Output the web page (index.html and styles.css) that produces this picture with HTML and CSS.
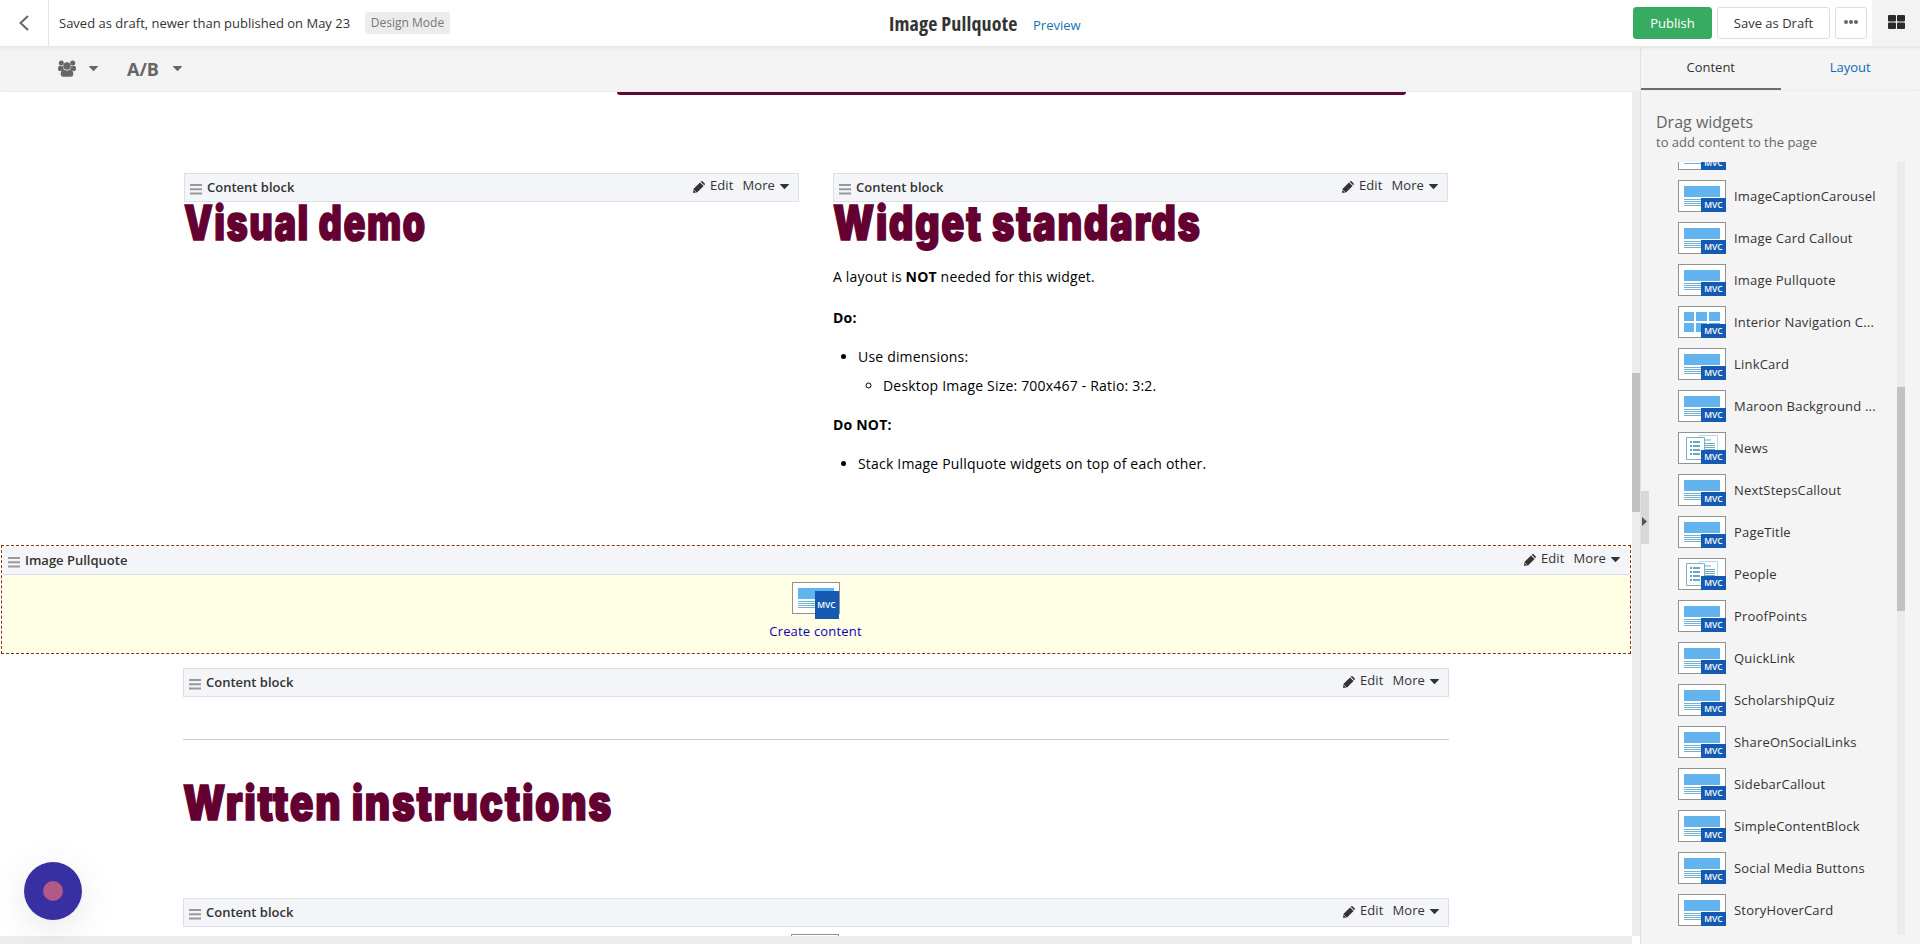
FILE: index.html
```
<!DOCTYPE html>
<html lang="en">
<head>
  <meta charset="UTF-8">
  <meta name="viewport" content="width=device-width, initial-scale=1.0">
  <title>Image Pullquote</title>
  <link rel="stylesheet" href="styles.css">
</head>
<body>
  <svg class="sprite" aria-hidden="true">
    <symbol id="bars" viewBox="0 0 12 11"><path d="M0 0h12v2H0zM0 4.3h12v2H0zM0 8.6h12v2H0z"/></symbol>
    <symbol id="pencil" viewBox="0 0 12 12"><path d="M0 12l.7-4.300L7 1.400l3.600 3.600L4.300 11.300zM7.700.8L8.300.3q.6-.5 1.200 0l2.200 2.200q.5.600 0 1.200l-.5.600z"/><path d="M1.200 9.200l1.600 1.600" stroke="#f3f5f8" stroke-width=".7"/></symbol>
    <symbol id="caret" viewBox="0 0 9 5"><path d="M.3 0h8.4q.5.3.1.7L5 4.7q-.5.5-1 0L.2.7Q-.2.3.3 0z"/></symbol>
    <symbol id="card" viewBox="0 0 48 32">
      <rect x=".5" y=".5" width="47" height="31" fill="#fff" stroke="#929292"/>
      <path d="M6 6h36v11H6z" fill="#63b3ee"/>
      <path d="M6 19.5h36M6 21.5h36M6 23.5h36M6 25.5h36" stroke="#74b3d0" stroke-width="1"/>
    </symbol>
    <symbol id="tiles" viewBox="0 0 48 32">
      <rect x=".5" y=".5" width="47" height="31" fill="#fff" stroke="#929292"/>
      <path d="M6 6h10v9H6zM18 6h11v9H18zM31 6h11v9H31zM6 17h10v9H6zM18 17h11v9H18zM31 17h11v9H31z" fill="#63b3ee"/>
    </symbol>
    <symbol id="list" viewBox="0 0 48 32">
      <rect x=".5" y=".5" width="47" height="31" fill="#fff" stroke="#929292"/>
      <path d="M21.5 5V3.5h18v21h-12" fill="none" stroke="#b5dbe5"/>
      <path d="M27 8h6M27 11.5h10M27 13.5h10M27 15.5h10M27 17.5h10" stroke="#6fa8c4"/>
      <path d="M8.500 5.500h18v22h-18z" fill="#fff" stroke="#7fb1c6"/>
      <path d="M12 10h2M12 14h2M12 18h2M12 22h2M15 10h7M15 14h7M15 18h7M15 22h7" stroke="#6fa8c4" stroke-width="2"/>
    </symbol>
  </svg>

  <header class="topbar">
    <a class="back"><svg width="10" height="16" viewBox="0 0 10 16"><path d="M9 1L1.500 8 9 15" fill="none" stroke="#666" stroke-width="2"/></svg></a>
    <span class="status">Saved as draft, newer than published on May 23</span>
    <span class="mode">Design Mode</span>
    <div class="page-title">
      <h1>Image Pullquote</h1>
      <a class="preview">Preview</a>
    </div>
    <div class="actions">
      <button class="btn publish">Publish</button>
      <button class="btn draft">Save as Draft</button>
      <button class="btn dots"><i></i><i></i><i></i></button>
      <div class="toggle"><svg width="17" height="14" viewBox="0 0 17 14" fill="#2b2b2b"><rect width="8" height="6.400" rx="1"/><rect x="9" width="8" height="6.400" rx="1"/><rect y="7.600" width="8" height="6.400" rx="1"/><rect x="9" y="7.600" width="8" height="6.400" rx="1"/></svg></div>
    </div>
  </header>

  <div class="workspace">
    <div class="editor">
      <div class="toolbar">
        <svg class="users" width="18" height="17" viewBox="0 0 18 17"><circle cx="3.300" cy="3" r="2.500"/><circle cx="14.700" cy="3" r="2.500"/><path d="M0 9q0-3.300 2-3.300 2 1 3.500.5Q4.800 8.300 6 9.500q-2 .2-3 1.500H1.500Q0 11 0 9zM18 9q0-3.300-2-3.300-2 1-3.500.5.7 2.100-.5 3.300 2 .2 3 1.500h1.500Q18 11 18 9z"/><circle cx="9" cy="6" r="3.700"/><path d="M2.700 14.300q0-4.800 3.200-4.800 3.100 2.300 6.200 0 3.200 0 3.200 4.800 0 2.400-2.300 2.400H5q-2.300 0-2.300-2.400z"/></svg>
        <svg class="arrow" width="9" height="5"><use href="#caret"/></svg>
        <span class="ab">A/B</span>
        <svg class="arrow" width="9" height="5"><use href="#caret"/></svg>
      </div>

      <div class="frame">
        <div class="canvas">
          <div class="hero-edge"></div>

          <div class="columns">
            <section>
              <div class="block-bar">
                <svg class="grip" width="12" height="11"><use href="#bars"/></svg><b>Content block</b>
                <span class="tools"><svg width="12" height="12"><use href="#pencil"/></svg><a>Edit</a><a>More</a><svg width="9" height="5"><use href="#caret"/></svg></span>
              </div>
              <h2><span class="h-visual">Visual demo</span></h2>
            </section>
            <section>
              <div class="block-bar">
                <svg class="grip" width="12" height="11"><use href="#bars"/></svg><b>Content block</b>
                <span class="tools"><svg width="12" height="12"><use href="#pencil"/></svg><a>Edit</a><a>More</a><svg width="9" height="5"><use href="#caret"/></svg></span>
              </div>
              <h2><span class="h-widget">Widget standards</span></h2>
              <div class="copy">
                <p>A layout is <strong>NOT</strong> needed for this widget.</p>
                <p><strong>Do:</strong></p>
                <ul>
                  <li>Use dimensions:
                    <ul>
                      <li>Desktop Image Size: 700x467 - Ratio: 3:2.</li>
                    </ul>
                  </li>
                </ul>
                <p><strong>Do NOT:</strong></p>
                <ul>
                  <li>Stack Image Pullquote widgets on top of each other.</li>
                </ul>
              </div>
            </section>
          </div>

          <div class="pullquote">
            <div class="block-bar flush">
              <svg class="grip" width="12" height="11"><use href="#bars"/></svg><b>Image Pullquote</b>
              <span class="tools"><svg width="12" height="12"><use href="#pencil"/></svg><a>Edit</a><a>More</a><svg width="9" height="5"><use href="#caret"/></svg></span>
            </div>
            <div class="create">
              <div class="thumb large"><svg width="48" height="32"><use href="#card"/></svg><span>MVC</span></div>
              <a>Create content</a>
            </div>
          </div>

          <div class="wide">
            <div class="block-bar">
              <svg class="grip" width="12" height="11"><use href="#bars"/></svg><b>Content block</b>
              <span class="tools"><svg width="12" height="12"><use href="#pencil"/></svg><a>Edit</a><a>More</a><svg width="9" height="5"><use href="#caret"/></svg></span>
            </div>
            <hr>
            <h2><span class="h-written">Written instructions</span></h2>
            <div class="block-bar last">
              <svg class="grip" width="12" height="11"><use href="#bars"/></svg><b>Content block</b>
              <span class="tools"><svg width="12" height="12"><use href="#pencil"/></svg><a>Edit</a><a>More</a><svg width="9" height="5"><use href="#caret"/></svg></span>
            </div>
            <div class="next-widget"><svg width="48" height="32"><use href="#card"/></svg></div>
          </div>
        </div>
        <div class="scroll-y"><div class="thumb-y"></div></div>
        <div class="scroll-x"></div>
      </div>
    </div>

    <aside class="sidebar">
      <div class="tabs">
        <a class="tab active">Content</a>
        <a class="tab">Layout</a>
      </div>
      <div class="intro">
        <h3>Drag widgets</h3>
        <p>to add content to the page</p>
      </div>
      <div class="widget-area">
        <ul class="widgets">
          <li><div class="thumb"><svg width="48" height="32"><use href="#card"/></svg><span>MVC</span></div></li>
          <li><div class="thumb"><svg width="48" height="32"><use href="#card"/></svg><span>MVC</span></div><em>ImageCaptionCarousel</em></li>
          <li><div class="thumb"><svg width="48" height="32"><use href="#card"/></svg><span>MVC</span></div><em>Image Card Callout</em></li>
          <li><div class="thumb"><svg width="48" height="32"><use href="#card"/></svg><span>MVC</span></div><em>Image Pullquote</em></li>
          <li><div class="thumb"><svg width="48" height="32"><use href="#tiles"/></svg><span>MVC</span></div><em>Interior Navigation C...</em></li>
          <li><div class="thumb"><svg width="48" height="32"><use href="#card"/></svg><span>MVC</span></div><em>LinkCard</em></li>
          <li><div class="thumb"><svg width="48" height="32"><use href="#card"/></svg><span>MVC</span></div><em>Maroon Background ...</em></li>
          <li><div class="thumb"><svg width="48" height="32"><use href="#list"/></svg><span>MVC</span></div><em>News</em></li>
          <li><div class="thumb"><svg width="48" height="32"><use href="#card"/></svg><span>MVC</span></div><em>NextStepsCallout</em></li>
          <li><div class="thumb"><svg width="48" height="32"><use href="#card"/></svg><span>MVC</span></div><em>PageTitle</em></li>
          <li><div class="thumb"><svg width="48" height="32"><use href="#list"/></svg><span>MVC</span></div><em>People</em></li>
          <li><div class="thumb"><svg width="48" height="32"><use href="#card"/></svg><span>MVC</span></div><em>ProofPoints</em></li>
          <li><div class="thumb"><svg width="48" height="32"><use href="#card"/></svg><span>MVC</span></div><em>QuickLink</em></li>
          <li><div class="thumb"><svg width="48" height="32"><use href="#card"/></svg><span>MVC</span></div><em>ScholarshipQuiz</em></li>
          <li><div class="thumb"><svg width="48" height="32"><use href="#card"/></svg><span>MVC</span></div><em>ShareOnSocialLinks</em></li>
          <li><div class="thumb"><svg width="48" height="32"><use href="#card"/></svg><span>MVC</span></div><em>SidebarCallout</em></li>
          <li><div class="thumb"><svg width="48" height="32"><use href="#card"/></svg><span>MVC</span></div><em>SimpleContentBlock</em></li>
          <li><div class="thumb"><svg width="48" height="32"><use href="#card"/></svg><span>MVC</span></div><em>Social Media Buttons</em></li>
          <li><div class="thumb"><svg width="48" height="32"><use href="#card"/></svg><span>MVC</span></div><em>StoryHoverCard</em></li>
        </ul>
        <div class="list-scroll"><div class="list-thumb"></div></div>
      </div>
      <div class="collapse"><svg width="5" height="9" viewBox="0 0 5 9"><path d="M0 0l5 4.500L0 9z" fill="#555"/></svg></div>
    </aside>
  </div>

  <div class="recorder"><i></i></div>
</body>
</html>
```
FILE: styles.css
```
* {
  box-sizing: border-box;
}

body {
  margin: 0;
  width: 1920px;
  height: 944px;
  overflow: hidden;
  background: #fff;
  color: #333;
  font-family: "Open Sans", "Noto Sans", sans-serif;
  font-size: 13px;
}

h1, h2, h3, p, ul {
  margin: 0;
  padding: 0;
}

svg {
  display: block;
  flex: none;
}

.sprite {
  position: absolute;
  width: 0;
  height: 0;
}

/* top bar */
.topbar {
  display: flex;
  align-items: center;
  height: 46px;
}

.back {
  display: flex;
  align-items: center;
  width: 49px;
  height: 46px;
  padding-left: 19px;
  border-right: 1px solid #e4e4e4;
}

.status {
  width: 306px;
  padding-left: 10px;
  white-space: nowrap;
}

.mode {
  width: 85px;
  margin-left: 10px;
  height: 22px;
  line-height: 21px;
  text-align: center;
  font-size: 12px;
  color: #777;
  background: #ececec;
  border-radius: 3px;
}

.page-title {
  display: flex;
  align-items: center;
  margin-left: 439px;
}

.page-title h1 {
  width: 144px;
  padding-top: 2px;
  font-size: 20px;
  line-height: 44px;
  font-weight: 700;
  font-stretch: 75%;
  letter-spacing: .15px;
  white-space: nowrap;
}

.preview {
  padding-top: 4px;
  color: #1274ac;
}

.actions {
  display: flex;
  align-items: center;
  margin-left: auto;
}

.btn {
  height: 32px;
  padding: 0;
  border: 1px solid #dedede;
  border-radius: 3px;
  background: #fff;
  font: inherit;
  color: #333;
}

.publish {
  width: 79px;
  border-color: #38ab63;
  background: #38ab63;
  color: #fff;
}

.draft {
  width: 113px;
  margin: 0 5px;
}

.dots {
  display: flex;
  align-items: center;
  justify-content: center;
  gap: 1px;
  width: 32px;
  margin-right: 5px;
}

.dots i {
  width: 4px;
  height: 4px;
  margin-bottom: 2px;
  border-radius: 50%;
  background: #666;
}

.toggle {
  width: 48px;
  height: 46px;
  padding: 15px 0 0 16px;
  background: #f3f3f3;
}

/* editor */
.workspace {
  display: flex;
  height: 898px;
}

.editor {
  width: 1640px;
}

.toolbar {
  display: flex;
  align-items: center;
  height: 46px;
  padding-left: 58px;
  background: #f3f3f3;
  border-bottom: 1px solid #ececec;
  box-shadow: inset 0 4px 4px -3px #ddd;
  fill: #666;
}

.arrow {
  margin-left: 13px;
}

.ab {
  width: 33px;
  margin-left: 29px;
  font-size: 18px;
  font-weight: 700;
  color: #666;
}

.frame {
  display: grid;
  grid-template: 844px 8px / 1632px 8px;
}

.canvas {
  overflow: hidden;
}

.scroll-y,
.scroll-x {
  background: #ededed;
}

.thumb-y {
  height: 139px;
  margin-top: 281px;
  background: #c1c1c1;
}

.hero-edge {
  width: 789px;
  height: 3px;
  margin-left: 617px;
  background: #5c0a33;
  border-radius: 0 0 3px 3px;
}

.columns {
  display: grid;
  grid-template-columns: 615px 615px;
  gap: 34px;
  height: 372px;
  margin: 78px 0 0 184px;
}

.block-bar {
  display: flex;
  align-items: center;
  height: 29px;
  padding: 0 9px 0 5px;
  background: #f3f5f8;
  border: 1px solid #dcdfe3;
}

.block-bar b {
  margin-left: 5px;
  padding-bottom: 1px;
  font-size: 13px;
  font-weight: 600;
}

.grip {
  margin-top: 3px;
  fill: #999;
}

.tools {
  display: flex;
  align-items: center;
  margin-left: auto;
  padding-bottom: 5px;
  letter-spacing: .1px;
}

.tools svg {
  fill: #333;
}

.tools svg:first-child {
  margin-top: 4px;
}

.tools svg:last-child {
  margin-top: 3px;
}

.tools a {
  margin-left: 5px;
}

.tools a + a {
  margin: 0 5px 0 9px;
}

h2 {
  height: 46px;
  font-family: Inter, "Open Sans", sans-serif;
  font-size: 48px;
  font-weight: 900;
  line-height: 42px;
  letter-spacing: 2px;
  color: #630031;
  -webkit-text-stroke: 1.5px #630031;
  white-space: nowrap;
}

/* headline face is narrower than Inter Black */
h2 span {
  display: inline-block;
  transform-origin: 0 0;
}

.h-visual {
  transform: scaleX(.755);
}

.h-widget {
  transform: scaleX(.795);
}

.h-written {
  transform: scaleX(.815);
}

.copy {
  padding-top: 18px;
  font-size: 14px;
  line-height: 21px;
  letter-spacing: .19px;
  color: #000;
}

.copy p {
  margin-bottom: 20px;
}

.copy ul {
  margin: -2px 0 18px;
  padding-left: 25px;
}

.copy ul ul {
  margin: 8px 0 0;
}

.pullquote {
  width: 1630px;
  height: 109px;
  margin-left: 1px;
  padding: 1px;
  border: 1px dashed #86302f;
  background: #ffffe5;
}

.flush {
  height: 28px;
  border-width: 0 0 1px;
}

.create {
  display: flex;
  flex-direction: column;
  align-items: center;
  padding: 7px 1px 0 0;
}

.create a {
  margin-top: 8px;
  line-height: 18px;
  letter-spacing: .18px;
  color: #0c00b0;
}

.thumb {
  position: relative;
  width: 48px;
  height: 32px;
  flex: none;
}

.thumb span {
  position: absolute;
  right: 0;
  bottom: 0;
  width: 25px;
  height: 14px;
  background: #155ab2;
  color: #fff;
  font-size: 8.5px;
  font-weight: 600;
  line-height: 14px;
  text-align: center;
}

.large span {
  right: 1px;
  bottom: -5px;
  width: 24px;
  height: 28px;
  line-height: 28px;
}

.wide {
  width: 1266px;
  margin: 14px 0 0 183px;
}

.wide hr {
  height: 1px;
  margin: 42px 0 42px;
  border: 0;
  background: #ccc;
}

.last {
  margin-top: 70px;
}

.next-widget {
  margin: 7px 0 0 608px;
}

/* sidebar */
.sidebar {
  position: relative;
  width: 280px;
  background: #f4f4f4;
  border-left: 1px solid #e2e2e2;
}

.tabs {
  display: flex;
  height: 45px;
  border-bottom: 1px solid #ececec;
  box-shadow: inset 0 4px 4px -3px #ddd;
}

.tab {
  width: 140px;
  height: 44px;
  line-height: 43px;
  text-align: center;
  color: #0d68bb;
}

.active {
  color: #333;
  border-bottom: 2px solid #6e6b70;
}

.intro {
  height: 71px;
  padding: 20px 0 0 15px;
  color: #666;
}

.intro h3 {
  font-size: 16px;
  font-weight: 400;
  line-height: 22px;
}

.intro p {
  line-height: 18px;
}

.widget-area {
  display: flex;
  height: 773px;
  overflow: hidden;
}

.widgets {
  width: 241px;
  margin-top: -24px;
  padding-left: 37px;
  list-style: none;
}

.widgets li {
  display: flex;
  width: 201px;
  height: 42px;
}

.widgets em {
  margin-left: 8px;
  font-style: normal;
  line-height: 33px;
  letter-spacing: .2px;
  white-space: nowrap;
}

.list-scroll {
  width: 8px;
  margin-left: 15px;
  background: #ececec;
}

.list-thumb {
  height: 224px;
  margin-top: 225px;
  background: #c1c1c1;
}

.collapse {
  position: absolute;
  left: 0;
  top: 445px;
  display: flex;
  align-items: center;
  width: 8px;
  height: 53px;
  padding: 8px 0 0 1px;
  background: #d8d8d8;
}

/* floating record button */
.recorder {
  position: fixed;
  left: 24px;
  top: 862px;
  display: flex;
  align-items: center;
  justify-content: center;
  width: 58px;
  height: 58px;
  border-radius: 50%;
  background: #372fa2;
  box-shadow: 0 8px 36px rgba(0, 0, 0, .1);
}

.recorder i {
  width: 20px;
  height: 20px;
  border-radius: 50%;
  background: #b25a85;
}
```
